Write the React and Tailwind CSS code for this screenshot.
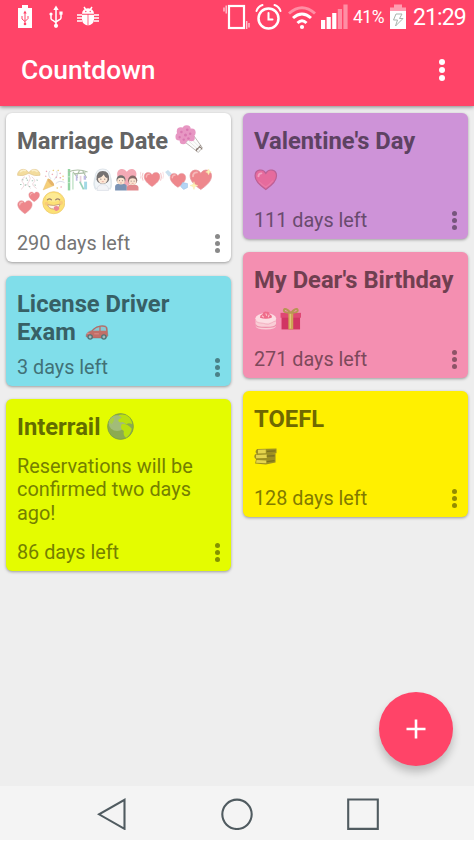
import React from 'react';

const BatteryUsb = () => (
    <svg className="w-4 h-6" viewBox="0 0 16 24">
        <path d="M5 0h6v3h4v20H1V3h4z" fill="#fff" />
        <path d="M8 7v12M5 11v3l3 2.500 3-3V11" stroke="#ff4468" strokeWidth="1" fill="none" />
        <path d="M8 5.500l1.700 3H6.300z" fill="#ff4468" />
        <circle cx="8" cy="19" r="1.300" fill="#ff4468" />
    </svg>
);

const Usb = () => (
    <svg className="w-[14px] h-6" viewBox="0 0 14 24">
        <path d="M7 4v17M2 9v4.500c0 2 5 2.500 5 5M12 8v5c0 2-5 2.500-5 4.500" stroke="#fff" strokeWidth="1.500" fill="none" />
        <path d="M7 .5l2.700 4.500H4.300z" fill="#fff" />
        <circle cx="2" cy="9" r="1.600" fill="#fff" />
        <path d="M10.400 6.500h3.200v3.200h-3.200z" fill="#fff" />
        <circle cx="7" cy="20.800" r="2.100" fill="#fff" />
    </svg>
);

const Bug = () => (
    <svg className="w-[22px] h-6" viewBox="0 0 22 24">
        <path d="M5 8.700a6 5.500 0 0 1 12 0z" fill="#fff" />
        <path d="M5 9.700h5.600v10.800a6 6 0 0 1-5.600-6zM11.400 9.700H17v4.800a6 6 0 0 1-5.600 6z" fill="#fff" />
        <path d="M7 2l2 3M15 2l-2 3M0 10h5M22 10h-5M0 13h5M22 13h-5M0 16h5M22 16h-5" stroke="#fff" strokeWidth="1.500" />
        <circle cx="8.800" cy="6.500" r="0.700" fill="#ff4468" />
        <circle cx="13.200" cy="6.500" r="0.700" fill="#ff4468" />
    </svg>
);

const Vibrate = () => (
    <svg className="w-[27px] h-7" viewBox="0 0 27 28">
        <rect x="6" y="3" width="15" height="22" fill="none" stroke="#fff" strokeWidth="2.200" />
        <path d="M3.200 2.500v8M1 4.500v4M23.700 18v8M26 20v4.500" stroke="#fff" strokeWidth="1.300" opacity="0.750" />
    </svg>
);

const Alarm = () => (
    <svg className="w-[27px] h-7" viewBox="0 0 27 28" fill="none" stroke="#fff" strokeLinecap="round">
        <circle cx="13.500" cy="15.500" r="10" strokeWidth="2.500" />
        <path d="M13.500 10V16.500H17.500" strokeWidth="2" />
        <path d="M1.500 8Q3 3.500 7.500 2M25.500 8Q24 3.500 19.500 2" strokeWidth="2" />
    </svg>
);

const Wifi = () => (
    <svg className="w-[28px] h-7" viewBox="0 0 28 28" fill="none" stroke="#fff" strokeWidth="3">
        <path d="M1 10.500Q14 -1 27 10.500" opacity="0.400" />
        <path d="M5 15Q14 7 23 15" />
        <path d="M9.500 20Q14 15.500 18.500 20" />
        <circle cx="14" cy="24" r="2.100" fill="#fff" stroke="none" />
    </svg>
);

const Signal = () => (
    <svg className="w-[27px] h-7" viewBox="0 0 27 28" fill="#fff">
        <path d="M0 17h4.200v9H0zM5.600 14h4.200v12H5.600zM11.200 10h4.200v16h-4.200z" />
        <path d="M16.800 6H21v20h-4.200zM22.400 1.500h4.200V26h-4.200z" opacity="0.400" />
    </svg>
);

const BatteryCharging = () => (
    <svg className="w-4 h-7" viewBox="0 0 16 28">
        <path d="M4 1.500h8v3h4v4H0v-4h4z" fill="#ff9db1" />
        <path d="M0 8h16v18H0z" fill="#fff" />
        <path d="M6 11h6l-2.500 4.500H13L5.500 23l2-6H3.500z" fill="none" stroke="#a9b5ae" strokeWidth="1" />
    </svg>
);

const HEART = 'M12 22C6 18 1 13.500 1 8C1 1.500 9 0 12 5.500C15 0 23 1.500 23 8C23 13.500 18 18 12 22Z';

const Heart = ({ transform }) => (
    <g transform={transform}>
        <path d={HEART} fill="#e95f66" stroke="#dd747c" strokeWidth="0.800" />
        <path d="M4 8.500Q4 4.500 8 4.500" fill="none" stroke="#f3a0a0" strokeWidth="2" strokeLinecap="round" />
    </g>
);

const Emoji = ({ name, className = 'w-6 h-6' }) => (
    <svg className={`shrink-0 ${className}`} viewBox="0 0 24 24">
        {EMOJIS[name]}
    </svg>
);

const EMOJIS = {
    bouquet: (
        <>
            <path d="M9 15L20 23.500l3.500-4L16 9z" fill="#fcfcfc" stroke="#a39d98" strokeWidth="0.600" />
            <path d="M12 14l9 8M14 12l8 8" stroke="#d5d8ce" strokeWidth="0.500" />
            <path d="M18.500 21.500l3.500-4M19.500 20q-2 1-1 2.500M21 19q2 0 2 2" stroke="#8b7d75" strokeWidth="0.900" fill="none" />
            <g fill="#e797c3">
                <circle cx="5" cy="5.500" r="3.500" />
                <circle cx="10" cy="3.700" r="3.500" />
                <circle cx="14.300" cy="6.500" r="3.400" />
                <circle cx="3.700" cy="10" r="3.300" />
                <circle cx="9" cy="9" r="4.800" />
                <circle cx="14" cy="11" r="3" />
                <circle cx="7" cy="13.500" r="3" />
            </g>
            <g fill="#d978b1">
                <circle cx="5.500" cy="6" r="1.100" />
                <circle cx="10.500" cy="4" r="1.100" />
                <circle cx="9" cy="8.500" r="1.300" />
                <circle cx="4" cy="10.500" r="1" />
                <circle cx="13" cy="7.500" r="1.100" />
                <circle cx="11.500" cy="11.500" r="1.100" />
                <circle cx="7.500" cy="12.500" r="1" />
            </g>
        </>
    ),
    confettiBall: (
        <>
            <path d="M.5 7.500C0 1 9-1 12 5C15-1 24 1 23.500 7.500Q18 9 12 5.500Q6 9 .5 7.500" fill="#efd17d" stroke="#d7b368" strokeWidth="0.700" />
            <path d="M3 4q3-3 6-1M15 3q3-2 6 1" stroke="#faeab8" strokeWidth="1.500" fill="none" />
            <path d="M8 9q-5 3-2 6t-2 7M12 7q3 4 0 7t2 7M15 9q5 4 2 6t3 6" stroke="#e8c3ca" strokeWidth="0.900" fill="none" />
            <path d="M5 12h1.500M10 12l1 1M15 13h1.500M8 18l1.500-1M18 17l1 1M12 19h1.500M9 10l1 1M3 17h1.500M20 12l1 1" stroke="#8bb3a0" strokeWidth="1.100" />
        </>
    ),
    party: (
        <>
            <path d="M1 22.500L6 11Q11 13 12 18z" fill="#f4bf4b" stroke="#dca94a" strokeWidth="0.500" />
            <ellipse cx="9" cy="14.700" rx="1.700" ry="4.500" transform="rotate(-42 9 14.700)" fill="#dd9b39" />
            <path d="M9 11q-4-4-1-8M12 12q5-3 3-9M14 16q4-4 9-1" fill="none" stroke="#c6cddd" strokeWidth="0.900" />
            <path d="M4 3l1 1M10 6l1 1M18 6l1-1M18 10h1.500M14 10l1-1M19 20l1-1M4 8l-.5 1" stroke="#e48a9e" strokeWidth="1.300" />
            <path d="M16 2l1 1M21 8l1 1M15 20l1 1M11 2l1 1M21 12h1" stroke="#e1bc4c" strokeWidth="1.300" />
        </>
    ),
    tanabata: (
        <>
            <path d="M3 1v22" stroke="#70c783" strokeWidth="2.500" />
            <path d="M7 5v17" stroke="#9dd2a6" strokeWidth="1.200" />
            <path d="M2 4Q12 0 22 4M7 4l5 6M14 2l-3 6M17 3l4 7M8 6l12-1" stroke="#92aa8a" strokeWidth="1.100" fill="none" />
            <path d="M10 7h1.700v6H10zM18 8h2.500v4H18z" fill="#aaa5dc" />
            <path d="M14 8h1.700v7H14z" fill="#e3bfd0" />
            <path d="M18.500 14h3v8h-3z" fill="#84cddd" />
            <path d="M14 14l4 8" stroke="#77c2a0" strokeWidth="1.700" />
            <path d="M2 9h2M2 15h2" stroke="#d5efd8" strokeWidth="0.700" />
        </>
    ),
    bride: (
        <>
            <path d="M4 21Q2 16 4 11Q4 1 12 1Q20 1 20 11Q22 16 20 21z" fill="#edf2f6" stroke="#c4cfd9" strokeWidth="0.700" />
            <path d="M5.500 12Q5 3 12 3Q19 3 18.500 12Q17 16 12 16Q7 16 5.500 12" fill="#484444" />
            <ellipse cx="12" cy="11.200" rx="4.900" ry="4.700" fill="#fce0c8" />
            <path d="M7 10.500Q11 10 13 6.500Q14 10 17 10.500Q17 4.500 12 4.500Q7 4.500 7 10.500" fill="#484444" />
            <circle cx="10" cy="11.500" r="0.600" fill="#5b504d" />
            <circle cx="14" cy="11.500" r="0.600" fill="#5b504d" />
            <path d="M11 14h2" stroke="#d57b72" strokeWidth="0.800" />
            <path d="M6 23Q6 17 12 17Q18 17 18 23z" fill="#f0f1f5" stroke="#cbd1dc" strokeWidth="0.700" />
            <path d="M4 10Q2 18 5 22M20 10Q22 18 19 22" fill="none" stroke="#d3dee5" strokeWidth="1.500" />
        </>
    ),
    couple: (
        <>
            <path d={HEART} transform="translate(1.200 -1) scale(.9)" fill="#ef8d9d" />
            <path d="M0 23v-4q0-3 6-3t6 3v4z" fill="#4f6f9c" />
            <path d="M12 23v-3q0-3 6-3t6 3v3z" fill="#d76469" />
            <circle cx="6" cy="12" r="4.600" fill="#403d3d" />
            <ellipse cx="6" cy="13.500" rx="3.900" ry="3.400" fill="#fbdac0" />
            <circle cx="18" cy="12.500" r="4.700" fill="#5c3935" />
            <ellipse cx="18" cy="14" rx="3.800" ry="3.400" fill="#fbdac0" />
            <path d="M4 13h1M7 13h1M16 13.500h1M19 13.500h1" stroke="#5b504d" strokeWidth="0.900" />
            <path d="M5 15.300h2M17 15.800h2" stroke="#cc776d" strokeWidth="0.700" />
        </>
    ),
    beating: (
        <>
            <Heart transform="translate(3.500 3) scale(.73)" />
            <path d="M3 5Q1 9 3 13M21 5Q23 9 21 13" fill="none" stroke="#f2adb1" strokeWidth="1" />
            <path d="M.7 4Q-.7 8 .7 11M23.300 4Q24.700 8 23.300 11" fill="none" stroke="#f6cdd0" strokeWidth="0.900" />
        </>
    ),
    arrowHeart: (
        <>
            <path d="M2 4l5 4" stroke="#8dbede" strokeWidth="1.800" />
            <path d="M0 4l3-2 4 4-3 3z" fill="#b9d6ea" />
            <Heart transform="translate(4.500 4) scale(.72)" />
            <path d="M18 15l5 1v4l-4 2-3-3z" fill="#9bc8f2" stroke="#7eb1dc" strokeWidth="0.600" />
        </>
    ),
    sparkleHeart: (
        <>
            <Heart />
            <path d="M5 14l1 3 3 1-3 1-1 3-1-3-3-1 3-1zM20 1l.7 2 2 1-2 1-.7 2-1-2-2-1 2-1z" fill="#fff1a0" stroke="#f3df94" strokeWidth="0.500" />
        </>
    ),
    twoHearts: (
        <>
            <Heart transform="translate(0 8.500) scale(.67)" />
            <Heart transform="translate(11.500 0) scale(.5)" />
        </>
    ),
    yum: (
        <>
            <circle cx="12" cy="12" r="11.300" fill="#fbd748" stroke="#e9b942" strokeWidth="0.800" />
            <ellipse cx="11.500" cy="6.500" rx="7.500" ry="4.500" fill="#fde36f" />
            <path d="M5.500 9q2-2 4 0M14 9q2-2 4 0" fill="none" stroke="#80593a" strokeWidth="1.200" strokeLinecap="round" />
            <path d="M5.500 14Q12 16 18.500 13.500Q17 18.500 12 18.500Q7 18.500 5.500 14" fill="#fff3dd" stroke="#a96f49" strokeWidth="0.800" />
            <path d="M12 16.500q3-2 5 0t-2 4q-3 0-3-4" fill="#e8626f" />
            <circle cx="4.500" cy="13" r="2" fill="#f6a950" opacity="0.600" />
            <circle cx="19.500" cy="12" r="2" fill="#f6a950" opacity="0.600" />
        </>
    ),
    heart: (
        <>
            <path d={HEART} fill="#e66b9d" stroke="#bb6095" strokeWidth="1.200" />
            <path d="M4.500 8.500Q4.500 5.500 7.500 5.500" fill="none" stroke="#f1a1c4" strokeWidth="2" strokeLinecap="round" />
            <path d="M5 14Q9 18 12 19.500Q16 17 19.500 13" fill="none" stroke="#ea7ba8" strokeWidth="1.200" />
        </>
    ),
    cake: (
        <>
            <path d="M1.500 11v8q0 4 10.500 4t10.500-4v-8z" fill="#f9cdd6" />
            <ellipse cx="12" cy="11.500" rx="10.500" ry="5" fill="#fcdde3" />
            <path d="M1.500 18q0 3 10.500 3t10.500-3" fill="none" stroke="#ed91ab" strokeWidth="1.300" />
            <path d="M1.500 14.500q2 2 5 2t5.500 1 5.500-1 5-2" fill="none" stroke="#f3b2c2" strokeWidth="1" />
            <path d="M6 11q0-3 2.500-3.500 1.500-4 4-2.500 3.500-1 3.500 2.500 3 1.500 2 3.500-6 2-12 0" fill="#ef6c8b" />
            <path d="M8 9l2 1.500M12 6.500l1 2.500M15.500 8l-1 2.500" stroke="#fcc1cb" strokeWidth="1.100" />
        </>
    ),
    gift: (
        <>
            <path d="M2.500 9h19v14h-19z" fill="#d13563" />
            <path d="M1.500 6h21v5h-21z" fill="#df4873" />
            <path d="M9.500 6h5v17h-5z" fill="#cda454" />
            <path d="M12 6Q4 6 5 3Q6 0 12 6Q18 0 19 3Q20 6 12 6" fill="none" stroke="#b79554" strokeWidth="2" />
            <path d="M11.500 7v15" stroke="#e2c880" strokeWidth="1.200" />
        </>
    ),
    car: (
        <>
            <path d="M0 17Q0 12 6 10.500Q11 5 18 5q4 0 5 2l.8 9-2 2.500H3z" fill="#c16e68" stroke="#946663" strokeWidth="0.500" />
            <path d="M7.500 10.500Q11 7 14.500 6.500V10.500zM16 6.400q4-.4 5.500.8l.5 3.300h-6z" fill="#84c9d4" />
            <path d="M1 13.500h3M9 14h5" stroke="#dd928c" strokeWidth="1" />
            <circle cx="4.500" cy="17.500" r="3" fill="#4d7377" />
            <circle cx="19.500" cy="17.500" r="3" fill="#4d7377" />
            <circle cx="4.500" cy="17.500" r="1.600" fill="#9dbabd" />
            <circle cx="19.500" cy="17.500" r="1.600" fill="#9dbabd" />
        </>
    ),
    globe: (
        <>
            <circle cx="12" cy="12" r="11.500" fill="#8cab50" stroke="#789940" strokeWidth="0.600" />
            <ellipse cx="9" cy="9" rx="7.500" ry="7" fill="#a2bc78" />
            <path d="M10 2Q16 0 20 4Q22 7 22.500 10Q19 8 17.500 10L14 8Q10 9 10 6L13 4z" fill="#b9e010" />
            <path d="M13 10Q18 9 22 14Q21 19 17 22Q14 20 15 16Q11 14 13 10" fill="#b9e010" />
            <path d="M2 8Q3 4 6 4Q7 7 4 10z" fill="#a9cd45" />
        </>
    ),
    books: (
        <g transform="translate(0 1)">
            <path d="M3 2L23 1.500v5L3 7.500Q0 5 3 2M1 7.500L22 6.500v5L2 12.500Q-1 10.500 1 7.500M2 12.500l20-1v4.500L12 18 1 17z" fill="#9d9022" />
            <path d="M4 2.800L12 2.600v3.800L4 6.700zM2 8.300l11-.5v3.400L2 11.600zM2.500 13.300l10 .5v3L2 16.300z" fill="#e4d44e" />
            <path d="M13 4.500l9-.5M13 9.500l8-.5M13 15l8-1" stroke="#7b7120" strokeWidth="1.300" />
        </g>
    ),
};

const Dots = ({ className, dotClass }) => (
    <div className={`flex flex-col items-center ${className}`}>
        <span className={`rounded-full bg-current ${dotClass}`}></span>
        <span className={`rounded-full bg-current ${dotClass}`}></span>
        <span className={`rounded-full bg-current ${dotClass}`}></span>
    </div>
);

const leftCards = [
    {
        title: 'Marriage Date',
        icon: 'bouquet',
        iconClass: 'inline-block w-7 h-7 ml-[7px] -mt-2 align-middle',
        emojis: ['confettiBall', 'party', 'tanabata', 'bride', 'couple', 'beating', 'arrowHeart', 'sparkleHeart', 'twoHearts', 'yum'],
        days: 290,
        className: 'h-[149px] mb-px bg-white text-[#757575]',
        titleClass: 'text-[#646464]',
        emojiClass: 'opacity-75',
    },
    {
        title: 'License Driver Exam',
        icon: 'car',
        iconClass: 'inline-block w-[26px] h-[22px] ml-2 -mt-1 align-middle',
        days: 3,
        className: 'h-[110px] bg-[#80deea] text-[#417177]',
        titleClass: 'text-[#376066]',
    },
    {
        title: 'Interrail',
        icon: 'globe',
        iconClass: 'inline-block w-[27px] h-[27px] ml-[7px] -mt-[5px] align-middle',
        text: 'Reservations will be confirmed two days ago!',
        days: 86,
        className: 'h-[172px] bg-[#e4fc00] text-[#748000]',
        titleClass: 'text-[#636d00]',
    },
];

const rightCards = [
    {
        title: "Valentine's Day",
        emojis: ['heart'],
        days: 111,
        className: 'h-[126px] bg-[#ce93d8] text-[#694b6e]',
        titleClass: 'text-[#5d4262]',
    },
    {
        title: "My Dear's Birthday",
        emojis: ['cake', 'gift'],
        days: 271,
        className: 'h-[126px] bg-[#f48fb1] text-[#7d495b]',
        titleClass: 'text-[#703f50]',
    },
    {
        title: 'TOEFL',
        emojis: ['books'],
        days: 128,
        className: 'h-[126px] bg-[#fff000] text-[#827b00]',
        titleClass: 'text-[#706900]',
    },
];

const Card = ({ card }) => (
    <div className={`flex flex-col shrink-0 rounded-md shadow-[0_1px_3px_rgba(0,0,0,0.35)] pl-[11px] pt-[14px] pb-[6px] ${card.className}`}>
        <h2 className={`text-[23.75px] leading-7 font-bold ${card.titleClass}`}>
            {card.title}
            {card.icon && <Emoji name={card.icon} className={card.iconClass} />}
        </h2>
        {card.emojis && (
            <div className={`flex flex-wrap gap-x-[1px] mt-[13px] ${card.emojiClass || ''}`}>
                {card.emojis.map(e => <Emoji key={e} name={e} className="w-[23.6px] h-[23.4px]" />)}
            </div>
        )}
        {card.text && <p className="text-[19.9px] leading-[23.4px] mt-[14px] pr-4">{card.text}</p>}
        <div className="flex items-center justify-between mt-auto pr-[11px]">
            <span className="pt-[2px] text-[19.8px] leading-6">{card.days} days left</span>
            <Dots className="gap-[2px] opacity-85" dotClass="w-[5px] h-[5px]" />
        </div>
    </div>
);

const App = () => {
    return (
        <div className="relative w-[474px] h-[842px] flex flex-col bg-[#eeeeee] overflow-hidden font-[Roboto,sans-serif]">
            <header className="h-[106px] shrink-0 bg-[#ff4468] text-white shadow-[0_1px_4px_rgba(0,0,0,0.45)]">
                <div className="flex items-center h-[34px] pl-[17px] pr-[9px]">
                    <BatteryUsb />
                    <div className="ml-4 mr-[14px]"><Usb /></div>
                    <Bug />
                    <div className="flex items-center ml-auto">
                        <Vibrate />
                        <div className="ml-[5px] mr-[6px]"><Alarm /></div>
                        <Wifi />
                        <div className="ml-[5px] mr-[5px]"><Signal /></div>
                        <span className="w-[32px] text-[17.5px] whitespace-nowrap tracking-[-0.5px]">41%</span>
                        <div className="ml-[5px] mr-[7px]"><BatteryCharging /></div>
                        <span className="w-[52px] pt-[1px] text-[23px] leading-7 whitespace-nowrap tracking-[-0.9px]">21:29</span>
                    </div>
                </div>
                <div className="flex items-center justify-between h-[72px] pl-[21px] pr-[29px]">
                    <h1 className="pt-[2px] text-[26.4px] font-medium">Countdown</h1>
                    <Dots className="gap-[2px]" dotClass="w-[6px] h-[6px]" />
                </div>
            </header>

            <main className="flex-1 flex items-start gap-3 px-[6px] pt-[7px]">
                <div className="w-[225px] flex flex-col gap-[13px]">
                    {leftCards.map(c => <Card key={c.title} card={c} />)}
                </div>
                <div className="w-[225px] flex flex-col gap-[13px]">
                    {rightCards.map(c => <Card key={c.title} card={c} />)}
                </div>
            </main>

            <button className="absolute left-[379px] top-[692px] w-[74px] h-[74px] rounded-full bg-[#ff4468] flex items-center justify-center shadow-[0_6px_9px_rgba(0,0,0,0.22)]">
                <svg className="w-5 h-5" viewBox="0 0 20 20">
                    <path d="M10 .5v19M.5 10h19" stroke="#fff" strokeWidth="2.600" />
                </svg>
            </button>

            <nav className="h-[56px] shrink-0 flex items-start justify-between bg-[#f4f4f4] border-b-2 border-white pl-[97px] pr-[95px] pt-3">
                <svg className="w-[30px] h-8" viewBox="0 0 30 32">
                    <path d="M27.500 1.800v29L2 16.300z" fill="none" stroke="#505b60" strokeWidth="2.100" />
                </svg>
                <svg className="w-8 h-8" viewBox="0 0 32 32">
                    <circle cx="16" cy="16.300" r="14.700" fill="none" stroke="#505b60" strokeWidth="2.100" />
                </svg>
                <svg className="w-8 h-8" viewBox="0 0 32 32">
                    <path d="M1.200 1.500h29.600v29.400H1.200z" fill="none" stroke="#505b60" strokeWidth="2.100" />
                </svg>
            </nav>
        </div>
    );
};

export default App;
